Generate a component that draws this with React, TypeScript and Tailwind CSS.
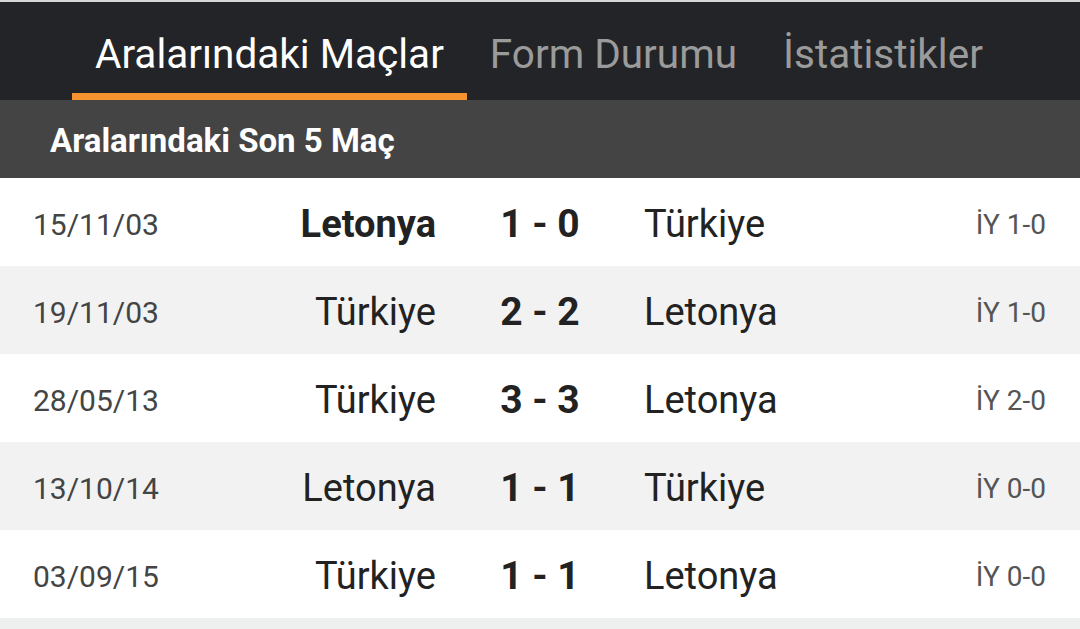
const matches = [
  { date: '15/11/03', home: 'Letonya', score: '1 - 0', away: 'Türkiye', ht: 'İY 1-0', homeWin: true },
  { date: '19/11/03', home: 'Türkiye', score: '2 - 2', away: 'Letonya', ht: 'İY 1-0', homeWin: false },
  { date: '28/05/13', home: 'Türkiye', score: '3 - 3', away: 'Letonya', ht: 'İY 2-0', homeWin: false },
  { date: '13/10/14', home: 'Letonya', score: '1 - 1', away: 'Türkiye', ht: 'İY 0-0', homeWin: false },
  { date: '03/09/15', home: 'Türkiye', score: '1 - 1', away: 'Letonya', ht: 'İY 0-0', homeWin: false },
];

export default function App() {
  return (
    <div className="h-[629px] w-[1080px] overflow-hidden bg-[#eef0ef] font-['Roboto',sans-serif]">
      <div className="h-[2px] bg-[#d6d6d6]" />
      <nav className="flex h-[98px] items-stretch bg-[#232427] pl-[72px]">
        <div className="flex flex-col justify-end">
          <div className="flex flex-1 items-center px-[23px] pt-[14px] text-[40.5px] text-white">Aralarındaki Maçlar</div>
          <div className="h-[7px] bg-[#f7932f]" />
        </div>
        <div className="flex items-center px-[23px] pt-[7px] text-[40.5px] text-[#9b9b9b]">Form Durumu</div>
        <div className="flex items-center px-[23px] pt-[7px] text-[40.5px] text-[#9b9b9b]">İstatistikler</div>
      </nav>
      <div className="flex h-[78px] items-center bg-[#444444] px-[50px] pt-[4px] text-[33px] font-bold text-white">
        Aralarındaki Son 5 Maç
      </div>
      {matches.map((m, i) => (
        <div key={i} className={`flex h-[88px] items-center pt-[5px] ${i % 2 ? 'bg-[#f2f2f2]' : 'bg-white'}`}>
          <div className="w-[220px] pl-[33px] text-[30px] text-[#444444]">{m.date}</div>
          <div className={`w-[216px] text-right text-[38px] text-[#222222] ${m.homeWin ? 'font-bold' : ''}`}>{m.home}</div>
          <div className="w-[208px] text-center text-[39px] font-bold text-[#222222]">{m.score}</div>
          <div className="flex-1 text-[38px] text-[#222222]">{m.away}</div>
          <div className="pr-[34px] text-[28px] text-[#555555]">{m.ht}</div>
        </div>
      ))}
    </div>
  );
}
